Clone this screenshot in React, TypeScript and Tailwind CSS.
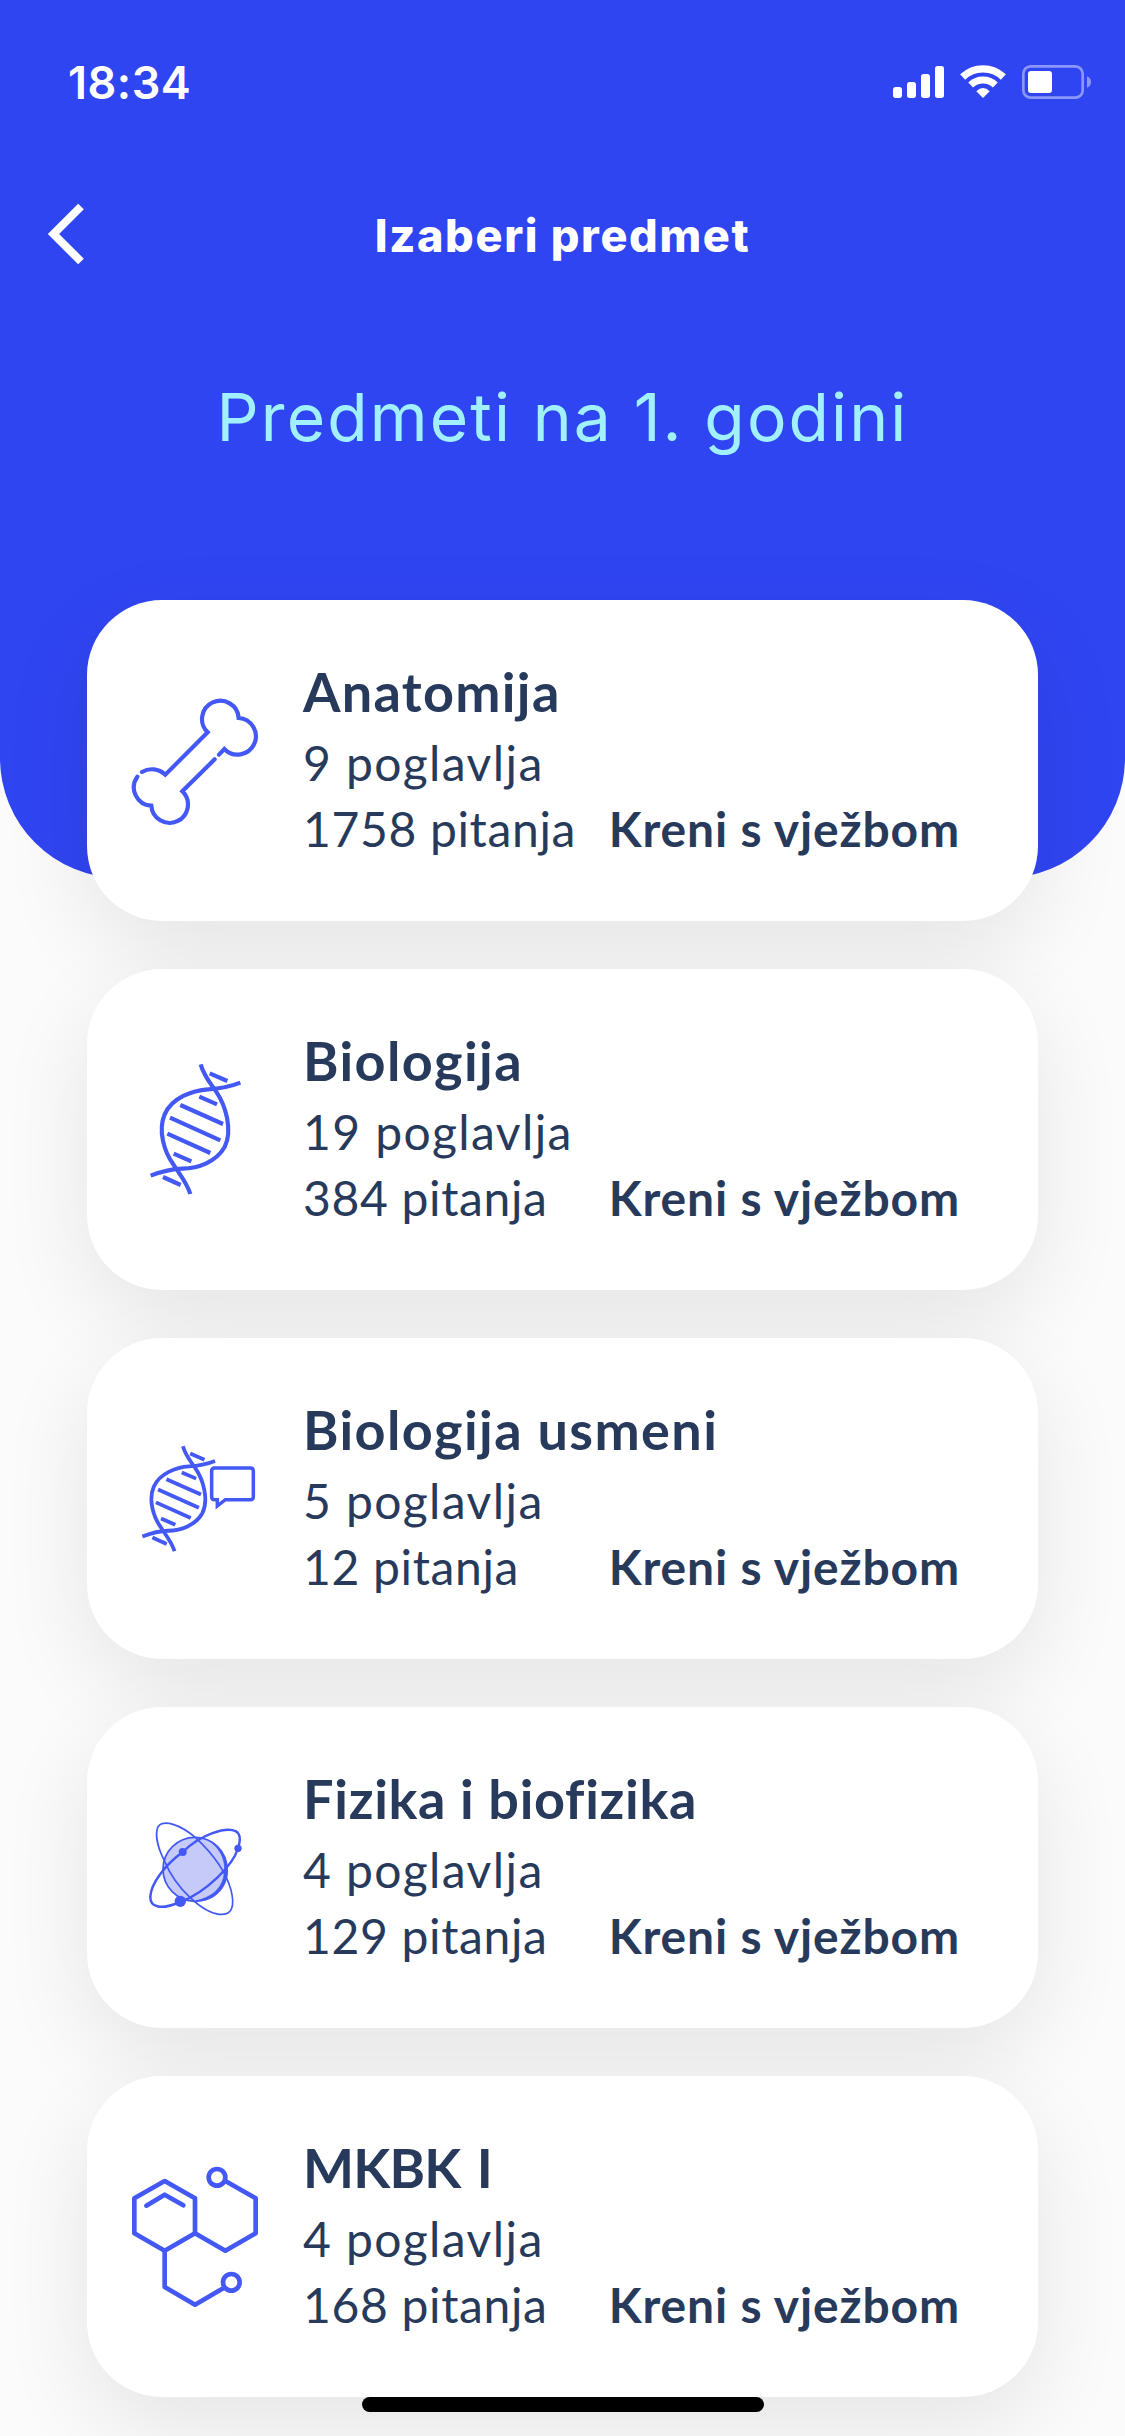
import React from 'react';

interface Subject {
  name: string;
  chapters: string;
  questions: string;
  icon: React.FC;
  nameTracking: string;
}

const iconClass = 'h-[160px] w-[150px] shrink-0 stroke-[#4358f4]';

const BoneIcon: React.FC = () => (
  <svg className={iconClass} viewBox="0 0 450 480" fill="none" strokeWidth="12.5" strokeLinecap="round" strokeLinejoin="miter">
    <path d="M66 273C88 260 116 262 136 281L263 154A55 55 0 1 1 356 111A55 55 0 1 1 313 204L297 221" />
    <path d="M284 235L187 331A55 55 0 1 1 94 374A55 55 0 0 1 52 287" />
  </svg>
);

const DnaStrands: React.FC = () => (
  <>
    <path d="M212 70C222 105 240 125 258 151C287 193 309 268 284 318C258 363 205 382 157 383C120 384 91 393 62 404" />
    <path d="M331 125C303 136 275 143 235 145C187 148 126 170 104 220C83 269 103 333 130 370C151 402 172 428 181 459" />
    <path d="M239 97L292 120M208 167L261 190M151 192L279 249M120 230L271 298M112 278L241 336M131 338L184 361M99 408L152 432" />
  </>
);

const DnaIcon: React.FC = () => (
  <svg className={iconClass} viewBox="-30 27 450 480" fill="none" strokeWidth="12.5">
    <DnaStrands />
  </svg>
);

const DnaChatIcon: React.FC = () => (
  <svg className={iconClass} viewBox="-30 -36 450 480" fill="none">
    <g transform="translate(-13 -11) scale(0.81)" strokeWidth="14">
      <DnaStrands />
    </g>
    <path d="M254 111H361Q370 111 370 120V197Q370 206 361 206H286L262 225V206H254Q245 206 245 197V120Q245 111 254 111Z" strokeWidth="10.5" />
  </svg>
);

const AtomIcon: React.FC = () => (
  <svg className={iconClass} viewBox="-30 -39 450 480" fill="none">
    <circle cx="195" cy="205" r="96" fill="#c5caf9" strokeWidth="5" />
    <path d="M240 120C278 151 291 188 280 232C271 265 244 290 198 299C246 303 287 270 293 216C293 177 273 141 240 120Z" fill="#4358f4" strokeWidth="2" />
    <path d="M84 77C100 55 150 69 199 112C248 158 288 213 303 267C316 319 305 343 267 340C219 335 139 265 104 181C84 142 74 101 84 77Z" strokeWidth="5" />
    <path d="M158 153C213 100 288 76 318 91C333 101 331 122 324 142C309 192 231 272 151 303" strokeWidth="7" />
    <path d="M158 153C105 192 63 247 61 287C60 321 94 327 151 303" strokeWidth="7.5" />
    <g className="fill-[#4358f4] stroke-none">
      <circle cx="158" cy="153" r="12" />
      <circle cx="324" cy="142" r="11" />
      <circle cx="151" cy="301" r="17" />
    </g>
  </svg>
);

const MoleculeIcon: React.FC = () => (
  <svg className={iconClass} viewBox="0 18 450 480" fill="none" strokeWidth="14" strokeLinejoin="round" strokeLinecap="round">
    <path d="M134 90L225 142V247L134 299L43 247V142Z" />
    <path d="M79 164L134 131L190 163" />
    <path d="M225 247L316 299L407 247V142L316 90" />
    <path d="M134 299V408L225 461L311 411" />
    <circle cx="291" cy="79" r="25" />
    <circle cx="334" cy="394" r="25" />
  </svg>
);

const subjects: Subject[] = [
  { name: 'Anatomija', chapters: '9 poglavlja', questions: '1758 pitanja', icon: BoneIcon, nameTracking: 'tracking-[1.3px]' },
  { name: 'Biologija', chapters: '19 poglavlja', questions: '384 pitanja', icon: DnaIcon, nameTracking: 'tracking-[1.4px]' },
  { name: 'Biologija usmeni', chapters: '5 poglavlja', questions: '12 pitanja', icon: DnaChatIcon, nameTracking: 'tracking-[1.4px]' },
  { name: 'Fizika i biofizika', chapters: '4 poglavlja', questions: '129 pitanja', icon: AtomIcon, nameTracking: 'tracking-[0.7px]' },
  { name: 'MKBK I', chapters: '4 poglavlja', questions: '168 pitanja', icon: MoleculeIcon, nameTracking: 'tracking-[-0.8px] [word-spacing:4px]' },
];

const StatusBar: React.FC = () => (
  <div className="flex h-[164px] items-center justify-between pl-[68px] pr-[34px]">
    <span className="text-[45px] font-semibold leading-none tracking-[0.5px]">18:34</span>
    <svg className="h-[34px] w-[198px]" viewBox="99 75 594 102" fill="none">
      <g fill="#fff">
        <rect x="99" y="141" width="27" height="33" rx="8" />
        <rect x="141" y="126" width="27" height="48" rx="8" />
        <rect x="183" y="102" width="27" height="72" rx="8" />
        <rect x="225" y="78" width="27" height="96" rx="8" />
        <path d="M369 174L349 154Q369 134 389 154Z" strokeLinejoin="round" />
        <rect x="504" y="93" width="72" height="66" rx="9" />
      </g>
      <g stroke="#fff">
        <path d="M308 111A88 88 0 0 1 430 111" strokeWidth="22" />
        <path d="M332 135A54 54 0 0 1 406 135" strokeWidth="21" />
      </g>
      <rect x="490" y="79" width="178" height="94" rx="22" stroke="#8c97fa" strokeWidth="8" />
      <path d="M681 109Q693 114 693 126Q693 138 681 143Z" fill="#8c97fa" />
    </svg>
  </div>
);

const SubjectCard: React.FC<{ subject: Subject }> = ({ subject }) => {
  const Icon = subject.icon;

  return (
    <div className="flex h-[321px] items-center rounded-[75px] bg-white pl-[33px] pr-[78px] shadow-[0_30px_90px_rgba(0,0,0,0.09)]">
      <Icon />
      <div className="-mt-[5px] ml-[33px] flex-1 whitespace-nowrap text-[48px] leading-[66px]">
        <h3 className={`mb-[1px] text-[54px] font-bold leading-[75px] ${subject.nameTracking}`}>{subject.name}</h3>
        <p className="tracking-[1.4px]">{subject.chapters}</p>
        <div className="flex items-baseline justify-between">
          <span className="tracking-[0.65px]">{subject.questions}</span>
          <button className="font-bold tracking-[0.85px]">Kreni s vježbom</button>
        </div>
      </div>
    </div>
  );
};

const App: React.FC = () => {
  return (
    <div className="relative h-[2436px] w-[1125px] overflow-hidden bg-[#fbfbfb] font-['Inter',sans-serif]">
      <header className="h-[878px] rounded-b-[120px] bg-[#3045f2] text-white">
        <StatusBar />
        <div className="grid h-[142px] grid-cols-[200px_1fr_200px] items-center">
          <button className="-mt-[2px] pl-[46px]" aria-label="Natrag">
            <svg className="h-[62px] w-[40px]" viewBox="46 203 40 62" fill="none" stroke="#fff" strokeWidth="8">
              <path d="M81 206.500L53.500 234L81 261.500" />
            </svg>
          </button>
          <h1 className="text-center text-[45px] font-extrabold leading-none tracking-[1.65px]">Izaberi predmet</h1>
        </div>
        <h2 className="mt-[71px] text-center text-[66px] font-normal leading-[80px] tracking-[2.1px] text-[#a0f0ff]">
          Predmeti na 1. godini
        </h2>
      </header>

      <main className="-mt-[278px] flex flex-col gap-[48px] px-[87px] font-['Lato',sans-serif] text-[#283a5b]">
        {subjects.map(subject => (
          <SubjectCard key={subject.name} subject={subject} />
        ))}
      </main>

      {/* Home indicator */}
      <div className="absolute bottom-[24px] left-[362px] h-[15px] w-[402px] rounded-full bg-black" />
    </div>
  );
};

export default App;
